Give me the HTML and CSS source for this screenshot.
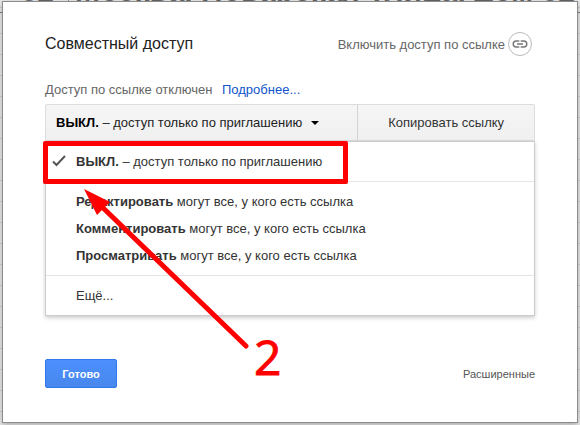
FILE: index.html
```html
<!DOCTYPE html>
<html lang="ru">
<head>
  <meta charset="UTF-8" />
  <meta name="viewport" content="width=device-width, initial-scale=1.0"/>
  <title>Совместный доступ</title>
  <link rel="stylesheet" href="styles.css">
</head>
<body>
  <div class="sheet-row" aria-hidden="true">
    <span class="sheet-cell">52</span>
    <span>Москва, Поварская улица, дом 52</span>
  </div>

  <main class="dialog">
    <header class="dialog-header">
      <h1>Совместный доступ</h1>
      <button type="button" class="link-toggle">
        Включить доступ по ссылке
        <span class="link-icon">
          <svg width="18" height="18" viewBox="0 0 24 24" fill="#777">
            <path d="M3.9 12c0-1.7 1.4-3.1 3.1-3.1h4V7H7a5 5 0 0 0 0 10h4v-1.9H7A3.1 3.1 0 0 1 3.9 12zM8 13h8v-2H8v2zm9-6h-4v1.9h4a3.1 3.1 0 0 1 0 6.2h-4V17h4a5 5 0 0 0 0-10z"/>
          </svg>
        </span>
      </button>
    </header>

    <p class="status">Доступ по ссылке отключен <a href="#">Подробнее...</a></p>

    <div class="share">
      <div class="share-bar">
        <button type="button" class="access-btn" aria-haspopup="true" aria-expanded="true">
          <span><b>ВЫКЛ.</b> – доступ только по приглашению</span>
          <span class="caret"></span>
        </button>
        <button type="button" class="copy-btn">Копировать ссылку</button>
      </div>

      <div class="menu">
        <div class="menu-group">
          <button type="button" class="menu-item">
            <svg class="check" width="14" height="12" viewBox="0 0 14 12" fill="none" stroke="#555" stroke-width="2">
              <path d="M1 6.5l3.5 3.5L13 1"/>
            </svg>
            <span><b>ВЫКЛ.</b> – доступ только по приглашению</span>
          </button>
        </div>
        <div class="menu-group">
          <button type="button" class="menu-item"><span><b>Редактировать</b> могут все, у кого есть ссылка</span></button>
          <button type="button" class="menu-item"><span><b>Комментировать</b> могут все, у кого есть ссылка</span></button>
          <button type="button" class="menu-item"><span><b>Просматривать</b> могут все, у кого есть ссылка</span></button>
        </div>
        <div class="menu-group">
          <button type="button" class="menu-item">Ещё...</button>
        </div>
      </div>

      <!-- red hint over the menu -->
      <div class="hint-frame"></div>
      <svg class="hint-arrow" width="168" height="164" viewBox="0 0 168 164">
        <path d="M14 14L162 157" stroke="#f00" stroke-width="5" stroke-linecap="round"/>
        <path d="M0 0L26 13L13 26z" fill="#f00"/>
      </svg>
      <span class="hint-number">2</span>
    </div>

    <footer class="dialog-footer">
      <button type="button" class="done-btn">Готово</button>
      <a href="#" class="advanced">Расширенные</a>
    </footer>
  </main>
</body>
</html>
```

FILE: styles.css
```css
* {
  box-sizing: border-box;
  padding: 0;
  margin: 0;
}

body {
  position: relative;
  min-height: 100vh;
  padding: 1px 2px 2px;
  overflow: hidden;
  font-family: "Liberation Sans", Arial, sans-serif;
  font-size: 13px;
  color: #333;
  background: repeating-linear-gradient(#ececec 0 20px, #d2d2d2 20px 21px) 0 13px;
}

button {
  border: none;
  background: none;
  font: inherit;
  color: inherit;
  cursor: pointer;
}

a {
  text-decoration: none;
}

/* the sheet behind the dialog */
.sheet-row {
  position: absolute;
  top: -26px;
  left: 0;
  right: 0;
  display: flex;
  gap: 6px;
  height: 39px;
  overflow: hidden;
  border-bottom: 1px solid #777;
  font-size: 30px;
  line-height: 34px;
  font-weight: bold;
  white-space: nowrap;
  color: #666;
}

.sheet-cell {
  width: 69px;
  padding-right: 14px;
  border-right: 1px solid #999;
  text-align: right;
}

.dialog {
  position: relative;
  padding: 30px 42px 34px;
  background: #fff;
  border: 1px solid #8c8c8c;
  box-shadow: 0 2px 6px rgba(0,0,0,0.3);
}

.dialog-header {
  display: flex;
  justify-content: space-between;
  align-items: center;
}

h1 {
  font-size: 16px;
  font-weight: normal;
  color: #222;
}

.link-toggle {
  display: flex;
  align-items: center;
  gap: 3px;
  margin-right: 3px;
  color: #666;
}

.link-icon {
  display: flex;
  justify-content: center;
  align-items: center;
  width: 24px;
  height: 24px;
  border: 1px solid #bbb;
  border-radius: 50%;
}

.status {
  margin: 26px 0 6px;
  line-height: 16px;
  font-size: 13px;
  color: #666;
}

.status a {
  margin-left: 6px;
  color: #15c;
}

.share {
  position: relative;
}

.share-bar {
  display: flex;
  height: 37px;
  border: 1px solid #dcdcdc;
  border-radius: 2px 2px 0 0;
  background: linear-gradient(#f5f5f5, #f0f0f0);
}

.access-btn {
  display: flex;
  align-items: center;
  gap: 9px;
  width: 64%;
  padding-left: 10px;
  border-right: 1px solid #d4d4d4;
  color: #222;
}

.access-btn b {
  color: #000;
}

.caret {
  border: 4px solid transparent;
  border-top-color: #000;
  border-bottom: none;
}

.copy-btn {
  flex: 1;
  color: #333;
}

.menu {
  border: 1px solid #ccc;
  background: #fff;
  box-shadow: 0 2px 4px rgba(0,0,0,0.2);
}

.menu-group {
  padding: 6px 0;
}

.menu-group + .menu-group {
  border-top: 1px solid #e5e5e5;
}

.menu-item {
  position: relative;
  display: block;
  width: 100%;
  padding-left: 30px;
  line-height: 27px;
  text-align: left;
}

.check {
  position: absolute;
  top: 7px;
  left: 6px;
}

.hint-frame {
  position: absolute;
  top: 37px;
  left: -2px;
  width: 305px;
  height: 43px;
  border: 5px solid #f00;
  border-radius: 2px;
}

.hint-arrow {
  position: absolute;
  top: 85px;
  left: 39px;
}

.hint-number {
  position: absolute;
  top: 226px;
  left: 209px;
  font-family: "Open Sans", sans-serif;
  font-size: 48px;
  line-height: 54px;
  color: #f00;
  -webkit-text-stroke: 1px #f00;
}

.dialog-footer {
  display: flex;
  justify-content: space-between;
  align-items: center;
  margin-top: 43px;
}

.done-btn {
  width: 72px;
  height: 29px;
  border: 1px solid #3079ed;
  border-radius: 2px;
  background: linear-gradient(#4d90fe, #4787ed);
  font-size: 11px;
  font-weight: bold;
  color: #fff;
}

.advanced {
  font-size: 11px;
  color: #555;
}
```
